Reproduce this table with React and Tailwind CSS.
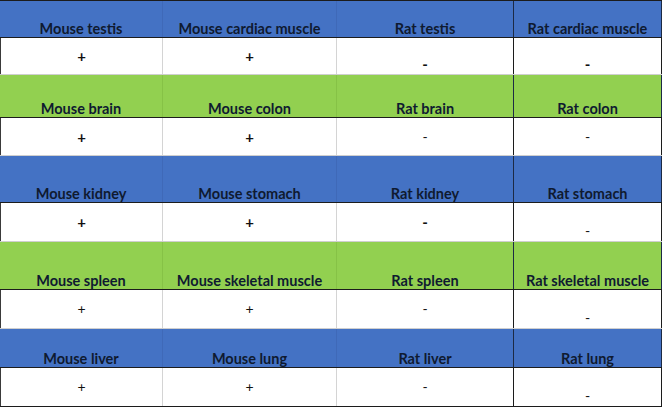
const BLUE = "bg-[#4472c4]";
const GREEN = "bg-[#92d050]";

const rows = [
  {
    color: BLUE,
    h: "h-[37px]",
    vh: "h-[37px]",
    names: ["Mouse testis", "Mouse cardiac muscle", "Rat testis", "Rat cardiac muscle"],
    signs: [
      { t: "+", bold: true },
      { t: "+", bold: true },
      { t: "-", bold: true, low: true },
      { t: "-", bold: true, low: true },
    ],
  },
  {
    color: GREEN,
    h: "h-[43px]",
    vh: "h-[38px]",
    names: ["Mouse brain", "Mouse colon", "Rat brain", "Rat colon"],
    signs: [
      { t: "+", bold: true },
      { t: "+", bold: true },
      { t: "-" },
      { t: "-" },
    ],
  },
  {
    color: BLUE,
    h: "h-[47px]",
    vh: "h-[39px]",
    names: ["Mouse kidney", "Mouse stomach", "Rat kidney", "Rat stomach"],
    signs: [
      { t: "+", bold: true },
      { t: "+", bold: true },
      { t: "-", bold: true },
      { t: "-", low: true },
    ],
  },
  {
    color: GREEN,
    h: "h-[48px]",
    vh: "h-[39px]",
    names: ["Mouse spleen", "Mouse skeletal muscle", "Rat spleen", "Rat skeletal muscle"],
    signs: [{ t: "+" }, { t: "+" }, { t: "-" }, { t: "-", low: true }],
  },
  {
    color: BLUE,
    h: "h-[39px]",
    vh: "h-[39px]",
    names: ["Mouse liver", "Mouse lung", "Rat liver", "Rat lung"],
    signs: [{ t: "+" }, { t: "+" }, { t: "-" }, { t: "-", low: true }],
  },
];

const widths = ["w-[163px]", "w-[174px]", "w-[177px]", "w-[148px]"];

function headerBorder(i, color) {
  if (i >= 2) return "border-r border-r-[#1c2a44]";
  return color === GREEN ? "border-r border-r-[#86c246]" : "border-r border-r-[#3f69b8]";
}

function cellBorder(i) {
  if (i >= 2) return "border-r border-r-[#1c1c1c]";
  return "border-r border-r-[#d4d4d4]";
}

export default function App() {
  return (
    <div className="w-[662px] h-[416px] bg-white font-['Lato','Liberation_Sans',sans-serif] text-[#0f1a30]">
      <div className="border-t border-t-[#1c1c1c]">
        {rows.map((row, r) => (
          <div key={r}>
            <div className={`flex ${row.h} ${row.color} border-b border-b-[#1c1c1c]`}>
              {row.names.map((name, i) => (
                <div
                  key={name}
                  className={`${widths[i]} flex items-end justify-center text-[14.5px] font-bold leading-[17px] ${headerBorder(
                    i,
                    row.color
                  )}`}
                >
                  {name}
                </div>
              ))}
            </div>
            <div
              className={`flex ${row.vh} bg-white border-b ${
                r === rows.length - 1 ? "border-b-[#1c1c1c]" : "border-b-[#cfcfcf]"
              }`}
            >
              {row.signs.map((s, i) => (
                <div
                  key={i}
                  className={`${widths[i]} flex justify-center ${s.low ? "items-end pb-[1px]" : "items-center"} ${
                    s.bold ? "font-bold text-[15px]" : "font-normal text-[14px]"
                  } leading-[18px] text-[#111] ${i === 0 ? "border-l border-l-[#3a3a3a]" : ""} ${cellBorder(i)}`}
                >
                  {s.t}
                </div>
              ))}
            </div>
          </div>
        ))}
      </div>
    </div>
  );
}
